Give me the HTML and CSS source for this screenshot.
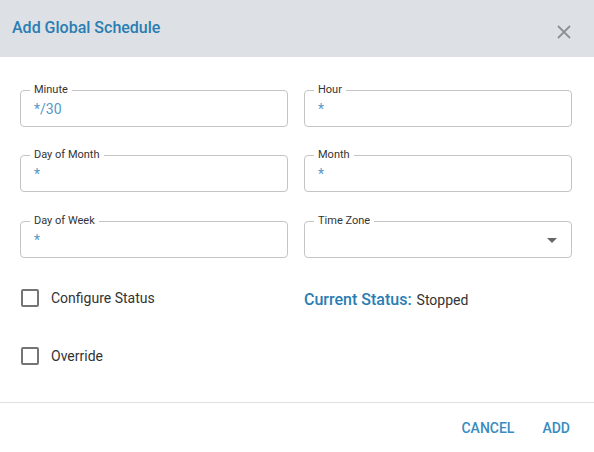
FILE: index.html
```html
<!DOCTYPE html>
<html>
<head>
<meta charset="utf-8">
<link rel="stylesheet" href="styles.css">
</head>
<body>
<div class="dialog">
  <header class="head">
    <h1 class="title">Add Global Schedule</h1>
    <svg class="close" width="14" height="14" viewBox="0 0 14 14"><path d="M1 1L13 13M13 1L1 13" stroke="#8c9196" stroke-width="1.8" fill="none"/></svg>
  </header>
  <main class="body">
    <div class="grid">
      <div class="field"><span class="lbl">Minute</span><span class="val">*/30</span></div>
      <div class="field"><span class="lbl">Hour</span><span class="val">*</span></div>
      <div class="field"><span class="lbl">Day of Month</span><span class="val">*</span></div>
      <div class="field"><span class="lbl">Month</span><span class="val">*</span></div>
      <div class="field"><span class="lbl">Day of Week</span><span class="val">*</span></div>
      <div class="field select"><span class="lbl">Time Zone</span><span class="val"></span><span class="arrow"></span></div>
    </div>
    <div class="lower">
      <div class="row"><span class="cb"></span><span class="cbtext">Configure Status</span></div>
      <div class="row"><span class="status">Current Status:</span><span class="stval">Stopped</span></div>
      <div class="row"><span class="cb"></span><span class="cbtext">Override</span></div>
      <div class="row"></div>
    </div>
  </main>
  <footer class="foot">
    <button class="btn">CANCEL</button>
    <button class="btn">ADD</button>
  </footer>
</div>
</body>
</html>
```
FILE: styles.css
```css
* { box-sizing: border-box; }
html, body { margin: 0; padding: 0; background: #fff; }
body { font-family: Roboto, "Liberation Sans", sans-serif; width: 594px; height: 452px; overflow: hidden; }
.dialog { display: flex; flex-direction: column; height: 452px; }
.head { height: 57px; background: #dde1e5; display: flex; align-items: center; justify-content: space-between; padding: 0 23px 0 12px; }
.title { margin: 0; font-size: 16px; font-weight: 500; color: #2a7db2; position: relative; top: -1px; }
.close { display: block; position: relative; top: 3px; }
.body { padding: 33px 22px 0 20px; }
.grid { display: grid; grid-template-columns: 268px 268px; column-gap: 16px; row-gap: 28px; }
.field { position: relative; height: 37px; border: 1px solid #c4c4c4; border-radius: 4px; display: flex; align-items: center; padding-left: 13px; }
.field:nth-child(n+5) { margin-top: 1px; }
.lbl { position: absolute; left: 9px; top: -8px; background: #fff; padding: 0 4px; font-size: 11px; line-height: 14px; color: #333; }
.val { font-size: 14px; color: #5598c8; }
.arrow { position: absolute; right: 14px; top: 16px; width: 0; height: 0; border-left: 5px solid transparent; border-right: 5px solid transparent; border-top: 5px solid #666; }
.lower { display: grid; grid-template-columns: 268px 268px; column-gap: 16px; row-gap: 22px; margin-top: 22px; }
.row { height: 36px; display: flex; align-items: center; }
.cb { width: 18px; height: 18px; border: 2px solid #757575; border-radius: 2px; margin-left: 1px; margin-right: 12px; }
.cbtext { font-size: 14px; color: #333; }
.status { font-size: 16px; font-weight: 500; color: #2a7db2; margin-right: 5px; position: relative; top: 1px; }
.stval { font-size: 14px; color: #333; position: relative; top: 2px; }
.foot { margin-top: auto; height: 50px; border-top: 1px solid #e0e0e0; display: flex; justify-content: flex-end; align-items: center; padding: 0 24px 0 0; gap: 28px; }
.btn { background: none; border: 0; padding: 0; font-family: inherit; font-size: 14px; font-weight: 500; color: #3a8cc0; letter-spacing: 0; }
```
